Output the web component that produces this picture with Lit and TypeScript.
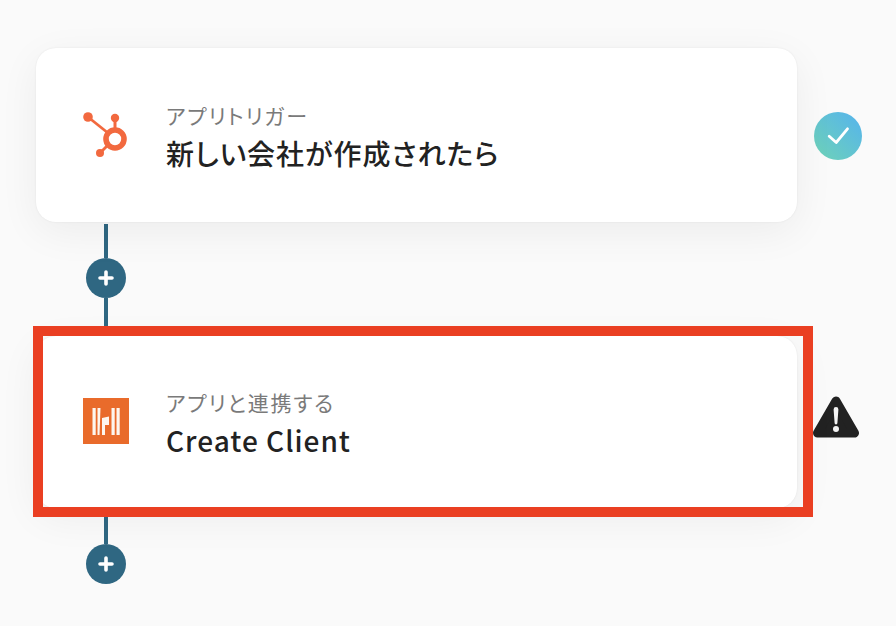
import { LitElement, html, css } from "lit";
import { customElement } from "lit/decorators.js";

@customElement("app-root")
export class AppRoot extends LitElement {
  static styles = css`
    :host {
      display: block;
      min-height: 100vh;
      background: #fafafa;
      font-family: "Noto Sans CJK JP", "Noto Sans", sans-serif;
      font-feature-settings: "palt";
      overflow: hidden;
    }
    .flow {
      display: flex;
      flex-direction: column;
      align-items: flex-start;
      padding: 48px 0 0 36px;
    }
    .row {
      display: grid;
      grid-template-columns: 761px 48px;
      column-gap: 17px;
      align-items: center;
    }
    .card {
      position: relative;
      box-sizing: border-box;
      height: 174px;
      background: #fff;
      border-radius: 20px;
      box-shadow: 0 0 2px rgba(0, 0, 0, 0.08), 0 10px 40px rgba(0, 0, 0, 0.06);
      display: grid;
      grid-template-columns: 46px 1fr;
      column-gap: 37px;
      align-items: center;
      padding-left: 47px;
    }
    .card.short {
      height: 172px;
    }
    .icon {
      display: block;
    }
    .icon.logo {
      margin-bottom: 2px;
    }
    .text {
      padding-top: 3px;
    }
    .label {
      font-size: 21px;
      line-height: 24px;
      letter-spacing: 1.8px;
      color: #7a7a7a;
    }
    .title {
      margin-top: 9px;
      font-size: 28px;
      line-height: 34px;
      font-weight: 500;
      letter-spacing: 1px;
      color: #222;
    }
    .frame {
      position: absolute;
      top: -10px;
      left: -3px;
      right: -16px;
      bottom: -9px;
      border: 10px solid #ea3f22;
      z-index: 2;
      pointer-events: none;
    }
    .check {
      width: 48px;
      height: 48px;
      border-radius: 50%;
      margin-top: 2px;
      background: linear-gradient(45deg, #6fd3b6, #55b3ee);
      display: flex;
      align-items: center;
      justify-content: center;
    }
    .warn {
      display: block;
      margin: 0 0 10px -1px;
    }
    .connector {
      display: flex;
      flex-direction: column;
      align-items: center;
      width: 40px;
      margin: 2px 0 0 50px;
    }
    .line {
      width: 4px;
      background: #2f6782;
    }
    .line.a {
      height: 34px;
    }
    .line.b {
      height: 38px;
    }
    .plus {
      width: 40px;
      height: 40px;
      border-radius: 50%;
      background: #2f6782;
      display: flex;
      align-items: center;
      justify-content: center;
    }
  `;

  private plus() {
    return html`<div class="plus">
      <svg width="16" height="16" viewBox="0 0 16 16">
        <path d="M8 2v12M2 8h12" stroke="#fff" stroke-width="3.6" stroke-linecap="round" fill="none" />
      </svg>
    </div>`;
  }

  render() {
    return html`
      <div class="flow">
        <div class="row">
          <div class="card">
            <svg class="icon" width="46" height="46" viewBox="0 0 46 46">
              <g fill="#f2693f" stroke="none">
                <circle cx="5" cy="5" r="4.8" />
                <circle cx="32" cy="6" r="4.2" />
                <circle cx="17" cy="41" r="4" />
              </g>
              <g stroke="#f2693f" fill="none">
                <path d="M5 5 L25 21" stroke-width="2.8" />
                <path d="M32 6 V17" stroke-width="3" />
                <path d="M17 41 L26 32" stroke-width="2.8" />
                <circle cx="32" cy="27" r="9" stroke-width="5.6" />
              </g>
            </svg>
            <div class="text">
              <div class="label">アプリトリガー</div>
              <div class="title">新しい会社が作成されたら</div>
            </div>
          </div>
          <div class="check">
            <svg width="26" height="26" viewBox="0 0 26 26">
              <path d="M4.2 13.2 L11.2 19.5 L22.5 5.8" stroke="#fff" stroke-width="2.8" stroke-linecap="round" stroke-linejoin="round" fill="none" />
            </svg>
          </div>
        </div>
        <div class="connector">
          <div class="line a"></div>
          ${this.plus()}
          <div class="line b"></div>
        </div>
        <div class="row">
          <div class="card short">
            <svg class="icon logo" width="46" height="46" viewBox="0 0 46 46">
              <rect x="0" y="0" width="46" height="46" fill="#e96b2b" />
              <g fill="#fdf6ee">
                <rect x="9.5" y="10" width="3.2" height="27" />
                <path d="M14.5 10 H17.5 L16.5 37 H14.5 Z" />
                <path d="M19 20 L26 18.5 V27 H22 V37 H19 Z" />
                <rect x="28.5" y="10" width="3.2" height="27" />
                <rect x="33.5" y="10" width="3.2" height="27" />
              </g>
            </svg>
            <div class="text">
              <div class="label">アプリと連携する</div>
              <div class="title">Create Client</div>
            </div>
            <div class="frame"></div>
          </div>
          <svg class="warn" width="46" height="42" viewBox="0 0 46 42">
            <path d="M23 5 L41.5 37 H4.5 Z" fill="#222" stroke="#222" stroke-width="9" stroke-linejoin="round" />
            <path d="M20.6 13.5 a2.4 2.4 0 0 1 4.8 0 L24.4 27 a1.4 1.4 0 0 1 -2.8 0 Z" fill="#f5f5f5" />
            <circle cx="23" cy="33" r="3" fill="#f5f5f5" />
          </svg>
        </div>
        <div class="connector">
          <div class="line a"></div>
          ${this.plus()}
        </div>
      </div>
    `;
  }
}
